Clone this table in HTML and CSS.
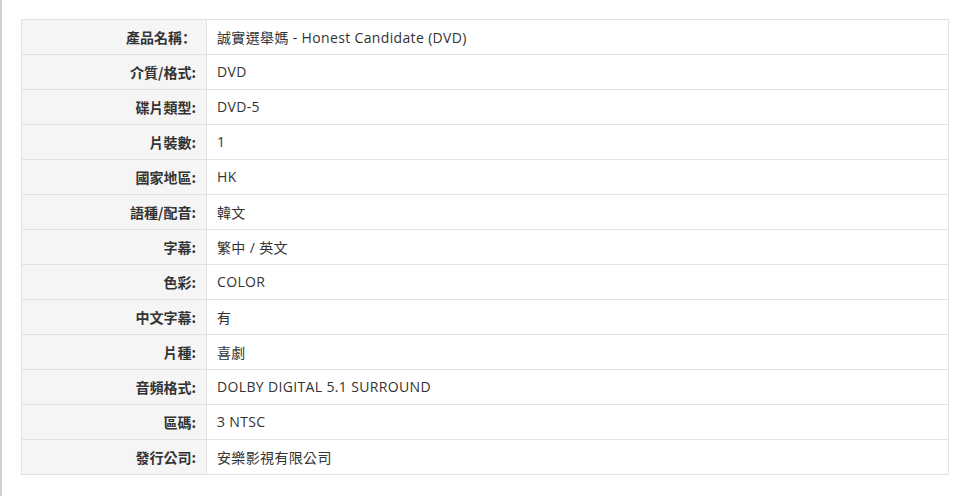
FILE: index.html
```html
<!DOCTYPE html>
<html lang="zh-Hant">
<head>
<meta charset="utf-8">
<link rel="stylesheet" href="styles.css">
</head>
<body>
<div class="page">
  <table class="spec">
    <tr><th>產品名稱<span class="fw-colon" lang="zh-CN">：</span></th><td>誠實選舉媽 - Honest Candidate (DVD)</td></tr>
    <tr><th>介質/格式:</th><td>DVD</td></tr>
    <tr><th>碟片類型:</th><td>DVD-5</td></tr>
    <tr><th>片裝數:</th><td>1</td></tr>
    <tr><th>國家地區:</th><td>HK</td></tr>
    <tr><th>語種/配音:</th><td>韓文</td></tr>
    <tr><th>字幕:</th><td>繁中 / 英文</td></tr>
    <tr><th>色彩:</th><td>COLOR</td></tr>
    <tr><th>中文字幕:</th><td>有</td></tr>
    <tr><th>片種:</th><td>喜劇</td></tr>
    <tr><th>音頻格式:</th><td>DOLBY DIGITAL 5.1 SURROUND</td></tr>
    <tr><th>區碼:</th><td>3 NTSC</td></tr>
    <tr><th>發行公司:</th><td>安樂影視有限公司</td></tr>
  </table>
</div>
</body>
</html>
```
FILE: styles.css
```css
html, body {
  margin: 0;
  padding: 0;
  background: #fff;
}
.page {
  border-left: 2px solid #d0d0d0;
  min-height: 496px;
  box-sizing: border-box;
  padding: 19px 0 0 19px;
  font-family: "Open Sans", "Noto Sans CJK TC", sans-serif;
  font-size: 14px;
  color: #333;
}
.spec {
  width: 928px;
  border-collapse: collapse;
  border: 1px solid #e2e2e2;
}
.spec th, .spec td {
  height: 35px;
  padding: 0 10px 1px;
  border: 1px solid #e2e2e2;
  vertical-align: middle;
  box-sizing: border-box;
}
.spec th {
  width: 185px;
  text-align: right;
  background: #f5f5f5;
  font-weight: bold;
  color: #333;
  font-family: "Noto Sans CJK TC", sans-serif;
}
.fw-colon {
  font-family: "Noto Sans CJK SC", sans-serif;
}
.spec td {
  text-align: left;
  background: #fff;
  letter-spacing: 0.35px;
}
```
